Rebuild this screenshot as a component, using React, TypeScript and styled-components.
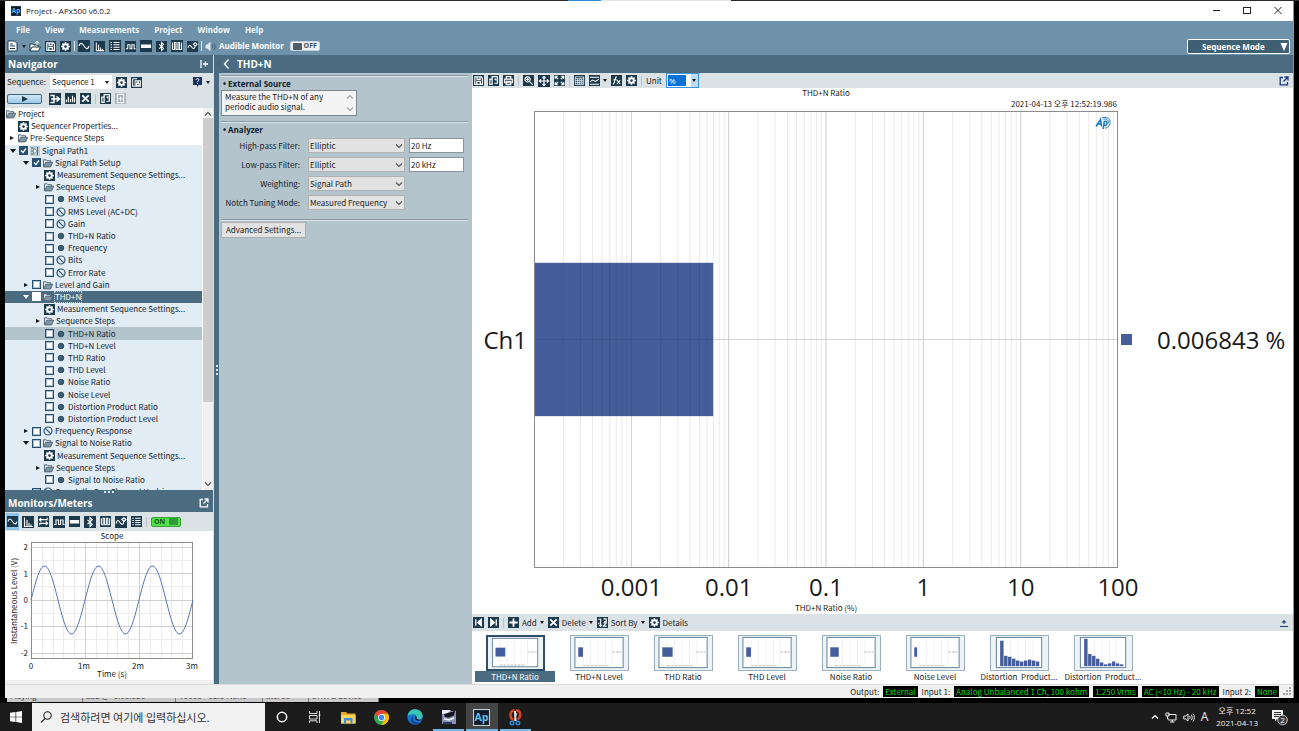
import React from 'react';
import styled, { createGlobalStyle } from 'styled-components';

const color = {
  menu: '#6f92ab',
  header: '#4a6b80',
  bar: '#dae2e6',
  panel: '#b3c4cd',
  tree: '#e1ecf5',
  icon: '#1d3a4c',
  plot: '#455e9b',
  plotLine: '#3d558f',
  status: '#f0f0f0',
  task: '#1c1c1c',
};

const small = '"Noto Sans CJK KR", "Open Sans", sans-serif';

const Global = createGlobalStyle`
  * { box-sizing: border-box; }
  body { margin: 0; background: #000; color: #1a1a1a;
    font-family: "Open Sans", "Noto Sans CJK KR", sans-serif; font-size: 8px; line-height: 12px; }
  button, input, select, textarea { font: inherit; color: inherit; margin: 0; padding: 0; border: 0; border-radius: 0; background: none; }
  ul { list-style: none; margin: 0; padding: 0; }
  h1, h2, h3, p { margin: 0; font-size: inherit; }
  svg { display: block; flex: none; }
`;

/* ---------- icons ---------- */

type IconName = keyof typeof glyphs;

const glyphs = {
  sine: <path d="M1 6C2 2.500 4 2.500 6 6S10 9.500 11 6" />,
  fft: <path d="M2.500 1.500V10.500H11M5 10V4M7 10V7M9 10V8.500" />,
  list: <path d="M4.500 2.500H10.500M4.500 4.800H10.500M4.500 7.200H10.500M4.500 9.500H10.500M1.500 2.500H3M1.500 4.800H3M1.500 7.200H3M1.500 9.500H3" />,
  square: <path d="M1 8.500H3V4H5.500V8.500H7.500V4H10V8.500H11.500" />,
  level: <path d="M1.500 5H10.500V7.500H1.500Z" fill="#fff" />,
  bluetooth: <path d="M3.500 3.800L8.300 8.200L6 10.500V1.500L8.300 3.800L3.500 8.200" />,
  wave: <path d="M1.500 2.500V9.500M1.500 9.500H3.500V2.500H5V9.500H7V2.500H8.500V9.500H10.500V2.500" />,
  trend: <path d="M1 7.500C2 3.500 3.500 4 5 6.500S8.500 9 9 5M6.800 3.500L9 1.800L11 3.500L9 5.500Z" />,
  gear: (
    <>
      <circle cx="6" cy="6" r="2.500" strokeWidth="2" />
      <path d="M6 1.300V3M6 9V10.700M1.300 6H3M9 6H10.700M2.700 2.700L3.900 3.900M8.100 8.100L9.300 9.300M9.300 2.700L8.100 3.900M3.900 8.100L2.700 9.300" strokeWidth="1.700" />
    </>
  ),
  save: <path d="M2 2H9L10.300 3.300V10.300H2ZM4.500 2V4.800H7.800V2M4.200 10V7H8V10" strokeWidth="1.300" />,
  copy: <path d="M2 10.300V4.500H4.500V10.300ZM4.500 4V1.700H10.200V9H7M7 4.500H8.500V6" strokeWidth="1.300" />,
  copyLock: <path d="M1.800 1.800H6.500M1.800 1.800V10.200H4M4.500 4H10.200V10.200H4.500ZM6 7H8.800V9H6ZM6.500 7V5.500H8.300V7" />,
  print: <path d="M3.500 4.500V1.800H8.500V4.500M1.800 4.500H10.200V8.500H1.800ZM3.500 7H8.500V10.500H3.500Z" strokeWidth="1.200" />,
  magnify: <path d="M5 2A2.800 2.800 0 1 1 5 7.600A2.800 2.800 0 1 1 5 2M7.200 7.200L10.500 10.500M3.500 4.800H6.500M5 3.300V6.300" strokeWidth="1.200" />,
  expand: <path d="M6 1.500V10.500M1.500 6H10.500M4.500 3L6 1.500L7.500 3M4.500 9L6 10.500L7.500 9M3 4.500L1.500 6L3 7.500M9 4.500L10.500 6L9 7.500" strokeWidth="1.200" />,
  fit: <path d="M1.500 4V1.500H4M8 1.500H10.500V4M10.500 8V10.500H8M4 10.500H1.500V8M2 2L4.500 4.500M10 2L7.500 4.500M10 10L7.500 7.500M2 10L4.500 7.500" strokeWidth="1.500" />,
  grid: <path d="M1.500 2H10.500V10.500H1.500ZM1.500 4H10.500M1.500 6.200H10.500M1.500 8.400H10.500M4 4V10.500M6.200 4V10.500M8.400 4V10.500" strokeWidth="0.800" />,
  graph: <path d="M1 2.500H11M1 10H11M1 7.500L4 5.500L7 7L11 4.500" />,
  fx: <path d="M2 10C4.500 10 3.500 2 6.300 2M2.800 5H6M6.500 5.500L10 9.800M10 5.500L6.500 9.800" strokeWidth="1.200" />,
  sequence: <path d="M1.500 2.500H5V9.500H1.500M2 6H10.500M7.500 3.500L10.500 6L7.500 8.500" strokeWidth="1.500" />,
  bars: <path d="M1.500 10V7M3.700 10V4M6 10V6.500M8.200 10V3M10.300 10V5" strokeWidth="1.300" />,
  close: <path d="M2.500 2.500L9.500 9.500M9.500 2.500L2.500 9.500" strokeWidth="2" />,
  plus: <path d="M6 1.500V10.500M1.500 6H10.500" strokeWidth="2" />,
  plusDoc: <path d="M2.500 1.500H9.500V10.500H2.500ZM6 4V8.500M3.800 6.200H8.200" />,
  swap: <path d="M2 4H10V2M3.500 2L1.500 4L3.500 6M10 8H2V10M8.500 6L10.500 8L8.500 10" strokeWidth="1.200" />,
  first: <path d="M3 2.500V9.500M9 2.500L5 6L9 9.500Z" fill="#fff" strokeWidth="1.400" />,
  last: <path d="M9 2.500V9.500M3 2.500L7 6L3 9.500Z" fill="#fff" strokeWidth="1.400" />,
  sort: <path d="M1.500 2.500H4V10M2.500 8.500L4 10.300L5.500 8.500M7 2H10V5H7.500M10.500 10H7L10 6.500H7M2 6V8" strokeWidth="1.200" />,
};

const Icon = ({ name, size = 12, bg = color.icon }: { name: IconName; size?: number; bg?: string }) => (
  <svg width={size} height={size} viewBox="0 0 12 12" fill="none" stroke="#fff" strokeWidth="1.100" aria-hidden="true">
    <rect width="12" height="12" fill={bg} stroke="none" />
    {glyphs[name]}
  </svg>
);

const FolderIcon = () => (
  <svg width="10" height="10" viewBox="0 0 11 10" aria-hidden="true">
    <path d="M.5 9V1.500H3.500L4.500 2.500H8.500V4" fill="#dfe8ec" stroke="#44596a" />
    <path d="M.6 9.300L3 4.200H10.700L8.400 9.300Z" fill="#7f96a5" stroke="#44596a" strokeWidth=".9" />
  </svg>
);
const DotIcon = () => (
  <svg width="10" height="10" viewBox="0 0 10 10" aria-hidden="true">
    <circle cx="5" cy="5" r="2.800" fill="#3f5f76" stroke="#1d3a4c" strokeWidth=".8" />
  </svg>
);
const NoneIcon = () => (
  <svg width="10" height="10" viewBox="0 0 10 10" fill="none" stroke="#33566e" strokeWidth="1.200" aria-hidden="true">
    <circle cx="5" cy="5" r="4" />
    <path d="M2.300 2.300L7.700 7.700" />
  </svg>
);
const PathIcon = () => (
  <svg width="10" height="10" viewBox="0 0 10 10" aria-hidden="true">
    <rect width="10" height="10" fill="#b9cad4" />
    <path d="M1 2H3M1 5H3M1 8H3M7.500 1V9" stroke="#567387" />
    <path d="M3.500 2L7 5L3.500 8Z" fill="#fff" stroke="#567387" strokeWidth=".7" />
  </svg>
);
const Chevron = ({ dir = 'down', stroke = '#555' }: { dir?: 'up' | 'down'; stroke?: string }) => (
  <svg width="8" height="8" viewBox="0 0 8 8" fill="none" stroke={stroke} strokeWidth="1.200" aria-hidden="true">
    <path d={dir === 'down' ? 'M1 2.500L4 5.500L7 2.500' : 'M1 5.500L4 2.500L7 5.500'} />
  </svg>
);
const Caret = styled.span`
  width: 0;
  border: 2px solid transparent;
  border-top: 3px solid #1a1a1a;
  border-bottom: 0;
  flex: none;
`;
const PopOut = ({ stroke = '#fff' }: { stroke?: string }) => (
  <svg width="10" height="10" viewBox="0 0 10 10" fill="none" stroke={stroke} strokeWidth="1.300" aria-hidden="true">
    <path d="M4 1.500H1.200V8.800H8.500V6M5.500 1H9V4.500M9 1L4.500 5.500" />
  </svg>
);

/* ---------- shared controls ---------- */

const IconButton = styled.button<{ $on?: boolean }>`
  display: flex;
  align-items: center;
  gap: 3px;
  padding: ${p => (p.$on ? '3px 1px' : '0')};
  margin: ${p => (p.$on ? '0 -1px' : '0')};
  background: ${p => (p.$on ? '#8cc4f0' : 'none')};
  white-space: nowrap;
`;
const Separator = styled.span<{ $light?: boolean }>`
  width: 1px;
  height: 10px;
  background: ${p => (p.$light ? '#dfe8ee' : '#b9c4ca')};
`;
const Spacer = styled.span`flex: 1;`;
const SmallText = styled.span`font-family: ${small};`;

/* ---------- frame ---------- */

const Screen = styled.div`
  height: 100vh;
  min-height: 600px;
  display: flex;
  flex-direction: column;
  background: #000;
  overflow: hidden;
`;
const TopEdge = styled.div`
  height: 1px;
  flex: none;
  display: grid;
  grid-template-columns: 568fr 33fr 130fr 568fr;
  background: #2d2d2d;
`;
const Sliver = styled.i<{ $c: string }>`background: ${p => p.$c};`;
const AppWindow = styled.main`
  flex: 1;
  min-height: 0;
  display: flex;
  flex-direction: column;
  margin: 0 5px;
  border-right: 1px solid #8099a9;
  background: ${color.status};
`;
const TitleBar = styled.header`
  height: 20px;
  flex: none;
  display: flex;
  align-items: center;
  gap: 5px;
  padding: 0 10px 0 6px;
  background: #fff;
  h1 { font-weight: 400; line-height: 18px; }
`;
const WindowButtons = styled.div`
  display: flex;
  gap: 21px;
`;
const CommandArea = styled.div`
  height: 34px;
  flex: none;
  display: flex;
  align-items: flex-end;
  justify-content: space-between;
  padding: 0 3px 1px 2px;
  background: ${color.menu};
  color: #fff;
  font-weight: 700;
`;
const Menu = styled.nav`
  display: flex;
  gap: 15px;
  padding: 0 0 0 9px;
  height: 16px;
`;
const MenuButton = styled.button`color: #f2f7fa;`;
const Tools = styled.div`
  display: flex;
  align-items: center;
  height: 16px;
  gap: 3px;
`;
const ToolGroup = styled.div`
  display: flex;
  align-items: center;
  gap: 4px;
`;
const Toggle = styled.button<{ $on?: boolean }>`
  display: flex;
  flex-direction: ${p => (p.$on ? 'row-reverse' : 'row')};
  align-items: center;
  justify-content: space-between;
  width: 30px;
  height: 10px;
  padding: 0 2px;
  margin-left: ${p => (p.$on ? '0' : '3px')};
  border-radius: 2px;
  line-height: 10px;
  font-size: 7px;
  font-weight: 700;
  background: ${p => (p.$on ? '#4fe04a' : '#eef1f3')};
  color: ${p => (p.$on ? '#14551a' : '#44525c')};
  border: 1px solid ${p => (p.$on ? '#39a538' : '#c5d0d7')};
  i { width: 9px; height: 7px; border-radius: 1px; background: ${p => (p.$on ? '#2f9c38' : '#4c5d69')}; }
`;
const ModeButton = styled.button`
  display: flex;
  align-items: center;
  justify-content: space-between;
  width: 103px;
  height: 15px;
  padding: 0 1px 0 14px;
  border: 1px solid #fff;
  border-radius: 2px;
  background: #3f5f73;
  color: #fff;
`;
const Body = styled.div`
  flex: 1;
  min-height: 0;
  display: grid;
  grid-template-columns: 208px 6px 1fr;
`;
const Bar = styled.div`
  height: 18px;
  flex: none;
  display: flex;
  align-items: center;
  gap: 6px;
  padding: 0 4px 1px 3px;
  background: ${color.header};
  color: #fff;
  h2 { font-size: 10px; line-height: 16px; flex: 1; }
`;
const Splitter = styled.div`
  display: flex;
  align-items: center;
  justify-content: center;
  background: ${color.header};
  border-left: 1px solid #d5e0e6;
`;

/* ---------- navigator ---------- */

const Side = styled.aside`
  display: flex;
  flex-direction: column;
  min-height: 0;
`;
const NavTools = styled.div`
  flex: none;
  height: 35px;
  padding: 0 3px 0 2px;
  background: ${color.bar};
`;
const NavRow = styled.div<{ $h: number }>`
  display: flex;
  align-items: center;
  gap: 4px;
  height: ${p => p.$h}px;
`;
const SeqSelect = styled.span`
  display: grid;
  align-items: center;
  width: 62px;
  height: 14px;
  background: #fff;
  > * { grid-area: 1 / 1; }
  select { appearance: none; padding-left: 2px; width: 100%; font-family: ${small}; }
  ${Caret} { justify-self: end; margin-right: 3px; pointer-events: none; }
`;
const RunButton = styled.button`
  width: 35px;
  height: 10px;
  margin-right: 3px;
  display: grid;
  place-items: center;
  border: 1px solid #3c6584;
  border-radius: 2px;
  background: linear-gradient(#cfe7f6, #9dcbea);
`;
const TreeBox = styled.div`
  flex: 1;
  min-height: 0;
  display: grid;
  grid-template-columns: 1fr 10px;
  background: #fff;
`;
const TreeView = styled.div`
  min-height: 0;
  overflow: hidden;
  font-family: ${small};
`;
const Tree = styled.ul<{ $rows: number }>`
  height: calc(100% - 4px);
  display: grid;
  grid-template-rows: repeat(${p => p.$rows}, 1fr);
`;
const NextRows = styled.ul`
  display: grid;
  grid-auto-rows: 12px;
`;
const TreeItem = styled.li<{ $depth: number; $tint?: boolean; $state?: 'active' | 'marked' }>`
  min-height: 0;
  display: flex;
  align-items: center;
  gap: 2px;
  padding-left: ${p => p.$depth}px;
  white-space: nowrap;
  margin-right: 1px;
  color: ${p => (p.$state === 'active' ? '#fff' : '#14212b')};
  background: ${p => (p.$state === 'active' ? color.header : p.$state === 'marked' ? color.panel : p.$tint ? color.tree : '#fff')};
  label { display: flex; align-items: center; gap: 2px; }
`;
const RowText = styled.span<{ $focus?: boolean }>`
  line-height: 10px;
  outline: ${p => (p.$focus ? '1px dotted #c7d3da' : 'none')};
`;
const Expander = styled.button<{ $open?: boolean; $light?: boolean }>`
  width: 9px;
  height: 10px;
  display: grid;
  place-items: center;
  color: ${p => (p.$light ? '#fff' : '#1a1a1a')};
  i {
    border: ${p => (p.$open ? '3px' : '2px')} solid transparent;
    ${p => (p.$open ? 'border-top: 4px solid currentColor; border-bottom: 0;' : 'border-left: 4px solid currentColor; border-right: 0;')}
  }
`;
const Check = styled.input<{ $light?: boolean }>`
  appearance: none;
  width: 9px;
  height: 9px;
  flex: none;
  border: 1px solid ${p => (p.$light ? '#fff' : '#27506f')};
  box-shadow: inset 0 0 0 1px ${p => (p.$light ? '#fff' : '#a9bdcc')};
  background: #fff;
  &:checked { box-shadow: none; background: #27506f; }
`;
const CheckWrap = styled.span`
  display: grid;
  place-items: center;
  > * { grid-area: 1 / 1; }
  svg { pointer-events: none; }
`;
const Scroll = styled.div`
  display: flex;
  flex-direction: column;
  align-items: center;
  background: #f0f0f0;
  padding: 2px 0;
  i { width: 100%; height: 75%; margin-bottom: auto; background: #cdcdcd; }
`;

type Row = {
  text: string; depth: number; tint?: boolean; open?: boolean; toggle?: boolean;
  check?: boolean; icon: 'folder' | 'gear' | 'dot' | 'none' | 'path'; state?: 'active' | 'marked';
};
const folder = (text: string, depth: number, open: boolean, extra: Partial<Row> = {}): Row =>
  ({ text, depth, toggle: true, open, icon: 'folder', tint: true, ...extra });
const leaf = (text: string, icon: 'dot' | 'none' = 'dot', state?: 'marked'): Row =>
  ({ text, depth: 40, icon, check: false, tint: true, state });
const settings: Row = { text: 'Measurement Sequence Settings...', depth: 39, icon: 'gear', tint: true };
const steps = folder('Sequence Steps', 28, false);

const rows: Row[] = [
  { text: 'Project', depth: 1, icon: 'folder' },
  { text: 'Sequencer Properties...', depth: 13, icon: 'gear' },
  folder('Pre-Sequence Steps', 2, false, { tint: false }),
  folder('Signal Path1', 3, true, { check: true, icon: 'path' }),
  folder('Signal Path Setup', 16, true, { check: true }),
  settings, steps,
  leaf('RMS Level'), leaf('RMS Level (AC+DC)', 'none'), leaf('Gain', 'none'), leaf('THD+N Ratio'),
  leaf('Frequency'), leaf('Bits', 'none'), leaf('Error Rate', 'none'),
  folder('Level and Gain', 16, false, { check: false }),
  folder('THD+N', 16, true, { check: false, state: 'active' }),
  settings, steps,
  leaf('THD+N Ratio', 'dot', 'marked'), leaf('THD+N Level'), leaf('THD Ratio'), leaf('THD Level'),
  leaf('Noise Ratio'), leaf('Noise Level'), leaf('Distortion Product Ratio'), leaf('Distortion Product Level'),
  folder('Frequency Response', 16, false, { check: false, icon: 'none' }),
  folder('Signal to Noise Ratio', 16, true, { check: false }),
  settings, steps,
  leaf('Signal to Noise Ratio'),
];
const nextRow = folder('Crosstalk, One Channel Undriven', 16, false, { check: false, icon: 'none' });

const rowIcon = {
  folder: <FolderIcon />, gear: <Icon name="gear" size={11} />, dot: <DotIcon />, none: <NoneIcon />, path: <PathIcon />,
};

const TreeRow = ({ row: r }: { row: Row }) => {
  const light = r.state === 'active';
  return (
    <TreeItem $depth={r.depth} $tint={r.tint} $state={r.state}>
      {r.toggle && <Expander $open={r.open} $light={light} aria-label={`Toggle ${r.text}`}><i /></Expander>}
      <label>
        {r.check !== undefined && (
          <CheckWrap>
            <Check type="checkbox" $light={light} defaultChecked={r.check} />
            {r.check && <svg width="9" height="9" viewBox="0 0 9 9" fill="none" stroke="#fff" strokeWidth="1.300"><path d="M2 4.500L4 6.500L7 2.500" /></svg>}
          </CheckWrap>
        )}
        {rowIcon[r.icon]}
        <RowText $focus={light}>{r.text}</RowText>
      </label>
    </TreeItem>
  );
};

const NavigatorTree = () => (
  <TreeBox>
    <TreeView>
      <Tree $rows={rows.length}>{rows.map((r, i) => <TreeRow key={i} row={r} />)}</Tree>
      <NextRows><TreeRow row={nextRow} /></NextRows>
    </TreeView>
    <Scroll><Chevron dir="up" /><i /><Chevron /></Scroll>
  </TreeBox>
);

/* ---------- monitors ---------- */

const MonitorHead = styled.div`
  flex: none;
  height: 22px;
  background: ${color.header};
`;
const Dots = styled.div<{ $vertical?: boolean }>`
  display: flex;
  flex-direction: ${p => (p.$vertical ? 'column' : 'row')};
  justify-content: center;
  gap: 2px;
  height: ${p => (p.$vertical ? 'auto' : '4px')};
  align-items: center;
  i { width: 2px; height: 2px; background: #dbe5ea; }
`;
const MonitorTools = styled.div`
  flex: none;
  height: 19px;
  display: flex;
  align-items: center;
  gap: 4px;
  padding-left: 2px;
  background: ${color.bar};
`;
const ScopeBox = styled.div`
  flex: none;
  height: 153px;
  background: #fff;
  border-bottom: 4px solid ${color.status};
`;

const scopePath = Array.from({ length: 163 }, (_, i) =>
  `${i ? 'L' : 'M'}${26 + i} ${(69 - 34 * Math.sin((i / 54) * 2 * Math.PI)).toFixed(1)}`).join('');

const Scope = () => (
  <svg width="208" height="149" viewBox="0 0 208 149" fontFamily={small} fontSize="8" fill="#222" role="img" aria-label="Scope">
    <g stroke="#ececec">
      {Array.from({ length: 14 }, (_, i) => <path key={i} d={`M${26.5 + Math.round((i + 1) * 10.8)} 12V128`} />)}
      {[29, 55, 82, 108].map(y => <path key={y} d={`M26 ${y + 0.5}H188`} />)}
    </g>
    <g stroke="#cfcfcf">
      <path d="M80.500 12V128M134.500 12V128M26 16.500H188M26 42.500H188M26 69.500H188M26 95.500H188M26 122.500H188" />
    </g>
    <rect x="26.500" y="11.500" width="161" height="116" fill="none" stroke="#8c8c8c" />
    <path d={scopePath} fill="none" stroke="#5a74b4" />
    <text x="107" y="8" textAnchor="middle">Scope</text>
    <g textAnchor="end">
      <text x="23" y="19">2</text><text x="23" y="46">1</text><text x="23" y="72">0</text>
      <text x="23" y="98">-1</text><text x="23" y="125">-2</text>
    </g>
    <g textAnchor="middle">
      <text x="26" y="138">0</text><text x="79" y="138">1m</text><text x="133" y="138">2m</text><text x="187" y="138">3m</text>
      <text x="107" y="146">Time (s)</text>
      <text x="0" y="0" transform="translate(12 70) rotate(-90)">Instantaneous Level (V)</text>
    </g>
  </svg>
);

/* ---------- measurement settings ---------- */

const Work = styled.section`
  min-width: 0;
  min-height: 0;
  display: flex;
  flex-direction: column;
`;
const WorkBody = styled.div`
  flex: 1;
  min-height: 0;
  display: grid;
  grid-template-columns: 253px 1fr;
`;
const Config = styled.section`
  background: ${color.panel};
  padding: 2px 4px 0 2px;
  font-family: ${small};
`;
const Section = styled.div<{ $h: number }>`
  height: ${p => p.$h}px;
  border-top: 1px solid #8d9aa3;
  box-shadow: inset 0 1px #dde6ea;
  padding-top: 2px;
  h3 { font: 700 8px/12px "Open Sans", sans-serif; padding: 0 0 0 2px; color: #10202c; }
`;
const Note = styled.div`
  display: flex;
  width: 136px;
  height: 26px;
  border: 1px solid #7d8890;
  background: #f4f4f4;
  textarea { flex: 1; min-width: 0; resize: none; overflow: hidden; padding: 1px 0 0 3px; line-height: 10px; outline: 0; }
`;
const NoteScroll = styled.div`
  width: 12px;
  display: flex;
  flex-direction: column;
  align-items: center;
  justify-content: space-between;
  padding: 2px 0;
`;
const Fields = styled.div`
  display: grid;
  grid-template-columns: 79px 97px 55px;
  column-gap: 8px;
  row-gap: 4px;
  align-items: center;
  padding-top: 2px;
  label { text-align: right; white-space: nowrap; }
`;
const Choice = styled.span`
  display: grid;
  align-items: center;
  height: 15px;
  border: 1px solid #b1b1b1;
  background: #e2e2e2;
  > * { grid-area: 1 / 1; }
  select { appearance: none; width: 100%; padding-left: 1px; }
  svg { justify-self: end; margin-right: 1px; pointer-events: none; }
`;
const Field = styled.input`
  width: 55px;
  height: 15px;
  margin-left: -4px;
  padding-left: 1px;
  background: #fff;
  border: 1px solid #8b959b;
`;
const Advanced = styled.button`
  width: 85px;
  height: 16px;
  border: 1px solid #adadad;
  background: #e2e2e2;
`;

const fields = [
  ['High-pass Filter:', 'Elliptic', '20 Hz'],
  ['Low-pass Filter:', 'Elliptic', '20 kHz'],
  ['Weighting:', 'Signal Path', ''],
  ['Notch Tuning Mode:', 'Measured Frequency', ''],
];

/* ---------- graph ---------- */

const GraphPane = styled.section`
  min-width: 0;
  min-height: 0;
  display: flex;
  flex-direction: column;
  background: #fff;
`;
const GraphTools = styled.div<{ $h: number }>`
  flex: none;
  height: ${p => p.$h}px;
  display: flex;
  align-items: center;
  gap: 4px;
  padding: 0 4px 0 1px;
  background: ${color.bar};
`;
const Unit = styled.span`
  display: grid;
  align-items: center;
  width: 33px;
  height: 15px;
  border: 1px solid #3a95dc;
  background: linear-gradient(90deg, #fff 24px, #bcdcf4 24px);
  > * { grid-area: 1 / 1; }
  select { appearance: none; width: 18px; height: 11px; margin-left: 1px; padding-left: 1px; background: #0a74d6; color: #fff; line-height: 11px; }
  ${Caret} { justify-self: end; margin-right: 2px; pointer-events: none; }
`;
const Chart = styled.div`
  flex: 1;
  min-height: 0;
  display: grid;
  grid-template-columns: 62px 1fr 175px;
  grid-template-rows: 23px 1fr 46px;
`;
const ChartHead = styled.div`
  grid-column: 2;
  line-height: 10px;
  text-align: center;
  font-family: ${small};
  time { display: block; text-align: right; padding-right: 1px; line-height: 12px; }
`;
const Channel = styled.div`
  grid-area: 2 / 1;
  align-self: center;
  text-align: right;
  padding-right: 7px;
  font-size: 24px;
  line-height: 32px;
`;
const PlotArea = styled.div`
  grid-area: 2 / 2;
  position: relative;
  min-height: 0;
  svg.plot { width: 100%; height: 100%; }
`;
const Logo = styled.svg`
  position: absolute;
  top: 5px;
  right: 6px;
`;
const Legend = styled.div`
  grid-area: 2 / 3;
  align-self: center;
  display: flex;
  align-items: center;
  gap: 25px;
  padding-left: 3px;
  font-size: 24px;
  line-height: 32px;
  white-space: nowrap;
  i { width: 11px; height: 11px; background: ${color.plot}; }
`;
const Axis = styled.div`
  grid-area: 3 / 2;
  text-align: center;
`;
const Ticks = styled.div`
  display: grid;
  grid-template-columns: repeat(6, 1fr);
  margin-right: -8.333%;
  margin-left: 8.333%;
  padding-top: 3px;
  font-size: 24px;
  line-height: 32px;
`;
const AxisName = styled.p`
  line-height: 10px;
  font-family: ${small};
`;

const minorLines = Array.from({ length: 6 }, (_, d) =>
  [2, 3, 4, 5, 6, 7, 8, 9].map(n => ((d + Math.log10(n)) / 6) * 100)).flat();
const majorLines = [1, 2, 3, 4, 5].map(d => (d / 6) * 100);
const barEnd = 30.6;

const VLine = ({ x, y1 = '0', y2 = '100%', stroke }: { x: number; y1?: string; y2?: string; stroke: string }) => (
  <line x1={`${x}%`} x2={`${x}%`} y1={y1} y2={y2} stroke={stroke} />
);

const LogPlot = () => (
  <PlotArea>
    <svg className="plot" aria-label="THD+N Ratio bar chart" role="img">
      {minorLines.map(x => <VLine key={x} x={x} stroke="#ebebeb" />)}
      {majorLines.map(x => <VLine key={x} x={x} stroke="#cdcdcd" />)}
      <line x1="0" x2="100%" y1="50%" y2="50%" stroke="#d2d2d2" />
      <rect x="0" y="33.33%" width={`${barEnd}%`} height="33.33%" fill={color.plot} />
      {[...minorLines, majorLines[0]].filter(x => x < barEnd).map(x => (
        <VLine key={x} x={x} y1="33.33%" y2="66.66%" stroke={color.plotLine} />
      ))}
      <line x1="0" x2={`${barEnd}%`} y1="50%" y2="50%" stroke={color.plotLine} />
      <rect x="0" y="33.33%" width={`${barEnd}%`} height="33.33%" fill="none" stroke={color.plotLine} />
      <rect x="0" y="0" width="100%" height="100%" fill="none" stroke="#8c8c8c" strokeWidth="2" />
    </svg>
    <Logo width="17" height="14" viewBox="0 0 17 14" fill="none" stroke="#1e78b8" aria-label="Audio Precision logo">
      <path d="M1 10.500L5.500 3.500L6.500 10.500M3 8H6.300" strokeWidth="1.600" />
      <path d="M8.200 13L9.300 5.500C13 4 13 10 8.900 9.500" strokeWidth="1.500" />
      <path d="M7 2C13 0 16 4 15 7.500C14.500 10 12.500 11.800 10 12.300M8.500 3.200C12 2.500 13.800 4.500 13.300 7.300" strokeWidth="1" />
    </Logo>
  </PlotArea>
);

/* ---------- thumbnails ---------- */

const Thumbs = styled.div`
  flex: none;
  height: 53px;
  display: flex;
  gap: 4px;
  padding: 4px 0 0 3px;
`;
const Thumb = styled.button<{ $selected?: boolean }>`
  width: 80px;
  height: 47px;
  display: flex;
  flex-direction: column;
  align-items: center;
  font-family: ${small};
  span { width: 100%; line-height: 11px; white-space: pre; background: ${p => (p.$selected ? color.header : 'none')}; color: ${p => (p.$selected ? '#fff' : '#1a1a1a')}; }
  svg { border: ${p => (p.$selected ? '2px solid #2c5069' : '1px solid #9db0bd')}; background: #eef3f6; }
`;

const thumbs: { name: string; bar?: number; bars?: number[] }[] = [
  { name: 'THD+N Ratio', bar: 11 }, { name: 'THD+N Level', bar: 5 }, { name: 'THD Ratio', bar: 11 },
  { name: 'THD Level', bar: 5 }, { name: 'Noise Ratio', bar: 9 }, { name: 'Noise Level', bar: 3 },
  { name: 'Distortion  Product...', bars: [27, 11, 10, 8, 6, 5, 6, 7, 6, 5] },
  { name: 'Distortion  Product...', bars: [29, 13, 11, 8, 4, 2, 3, 5, 3, 2] },
];

const ThumbGraph = ({ bar, bars }: { bar?: number; bars?: number[] }) => (
  <svg width="59" height="36" viewBox="0 0 59 36" aria-hidden="true">
    <rect x={bars ? 5 : 3.5} y="1.500" width={bars ? 48 : 51} height="32" fill="#fff" stroke="#5d7f98" />
    <path d="M12 3V30M20 3V30M28 3V30M36 3V30M43 3V30" stroke="#efefef" />
    {bar && (
      <>
        <rect x="7" y="12" width={bar} height="10" fill={color.plot} />
        <path d="M43 17H53M12 31.500H40" stroke="#9a9a9a" strokeDasharray="3 1" strokeWidth=".7" />
      </>
    )}
    {bars?.map((h, i) => <rect key={i} x={9 + i * 4.2} y={32 - h} width="3.600" height={h} fill={color.plot} />)}
  </svg>
);

/* ---------- status and task bars ---------- */

const StatusBar = styled.footer`
  flex: none;
  height: 14px;
  display: flex;
  align-items: center;
  justify-content: flex-end;
  gap: 4px;
  padding-right: 1px;
  border-top: 1px solid #dcdcdc;
  white-space: nowrap;
  font-family: ${small};
`;
const Readout = styled.span`
  height: 11px;
  line-height: 11px;
  padding: 0 2px;
  background: #000;
  color: #0bd616;
`;
const BackWindow = styled.div`
  flex: none;
  height: 5px;
  overflow: hidden;
  display: grid;
  grid-template-columns: 76px 93px 87px 46px 70px;
  margin-left: 7px;
  span {
    height: 4px; overflow: hidden; background: #c9c9c9; color: #333; border-right: 1px solid #777;
    display: flex; align-items: flex-end; padding-left: 3px; white-space: nowrap;
  }
`;
const TaskBar = styled.footer`
  flex: none;
  height: 28px;
  display: flex;
  background: ${color.task};
  color: #eee;
`;
const StartButton = styled.button`
  width: 32px;
  display: grid;
  place-items: center;
`;
const Search = styled.label`
  width: 233px;
  display: flex;
  align-items: center;
  gap: 8px;
  padding-left: 8px;
  background: #f1f1f1;
  input { flex: 1; min-width: 0; font-family: "Noto Sans CJK KR", sans-serif; font-size: 11px; outline: 0; }
  input::placeholder { color: #333; opacity: 1; }
`;
const TaskButtons = styled.div`
  width: 267px;
  display: flex;
`;
const TaskButton = styled.button<{ $running?: boolean; $active?: boolean }>`
  flex: 1;
  margin: 0 1px;
  display: grid;
  place-items: center;
  background: ${p => (p.$active ? '#454545' : 'none')};
  border-bottom: 2px solid ${p => (p.$running ? '#72b7ea' : 'transparent')};
  border-top: 2px solid transparent;
`;
const Tray = styled.div`
  display: flex;
  align-items: center;
  gap: 6px;
  padding-right: 11px;
`;
const ImeText = styled.span`
  font-size: 12px;
  line-height: 14px;
`;
const Clock = styled.time`
  text-align: center;
  line-height: 12px;
  padding: 0 7px 0 2px;
`;

const ApIcon = ({ size }: { size: number }) => (
  <svg width={size} height={size} viewBox="0 0 16 16" aria-hidden="true">
    <rect x=".5" y=".5" width="15" height="15" fill="#0e1d28" stroke={size > 12 ? '#c3d0d8' : '#0e1d28'} />
    <text x="8" y="11.500" textAnchor="middle" fontSize="10" fontWeight="700" fill="#63bfe8">Ap</text>
  </svg>
);

const monitorIcons: IconName[] = ['sine', 'fft', 'list', 'square', 'level', 'bluetooth', 'wave', 'trend'];
const scopeIcons: IconName[] = ['sine', 'fft', 'swap', 'square', 'level', 'bluetooth', 'wave', 'trend', 'list'];

export default function App() {
  return (
    <Screen>
      <Global />
      <TopEdge><Sliver $c="transparent" /><Sliver $c="#2f8ad8" /><Sliver $c="#e4e4e4" /></TopEdge>
      <AppWindow>
        <TitleBar>
          <ApIcon size={10} />
          <h1>Project - APx500 v6.0.2</h1>
          <Spacer />
          <WindowButtons>
            <IconButton aria-label="Minimize"><svg width="10" height="10" stroke="#222"><path d="M2 4.500H9" /></svg></IconButton>
            <IconButton aria-label="Maximize"><svg width="10" height="10" stroke="#222" fill="none"><rect x="1.500" y="1.500" width="7" height="6" /></svg></IconButton>
            <IconButton aria-label="Close"><svg width="10" height="10" stroke="#222"><path d="M1.500 1L8.500 8M8.500 1L1.500 8" /></svg></IconButton>
          </WindowButtons>
        </TitleBar>
        <CommandArea>
          <div>
            <Menu>
              {['File', 'View', 'Measurements', 'Project', 'Window', 'Help'].map(m => <MenuButton key={m}>{m}</MenuButton>)}
            </Menu>
            <Tools>
              <IconButton aria-label="New">
                <svg width="12" height="12" viewBox="0 0 12 12" aria-hidden="true"><path d="M1 1H7.500L10 3.500V11H1Z" fill="#fff" stroke="#1d3a4c" /><path d="M3 4H6M3 6H8M3 8.500H8" stroke="#1d3a4c" /></svg>
                <Caret />
              </IconButton>
              <ToolGroup>
                <IconButton aria-label="Open">
                  <svg width="12" height="12" viewBox="0 0 12 12" aria-hidden="true"><path d="M1 11V4H4L5 5H9V7" fill="#fff" stroke="#1d3a4c" /><path d="M1 11L3 7H11.500L9.500 11Z" fill="#fff" stroke="#1d3a4c" /><path d="M6 3.500L8 1L10 3.500M8 1V5" stroke="#fff" fill="none" /></svg>
                </IconButton>
                <IconButton aria-label="Save"><Icon name="save" size={11} /></IconButton>
                <IconButton aria-label="Settings"><Icon name="gear" size={11} /></IconButton>
              </ToolGroup>
              <Separator $light />
              <ToolGroup>
                {monitorIcons.map((n, i) => <IconButton key={n} aria-label={n}><Icon name={n} size={i % 2 ? 11 : 12} /></IconButton>)}
              </ToolGroup>
              <Separator $light />
              <svg width="11" height="11" viewBox="0 0 11 11" fill="none" stroke="#dfe8ee" aria-hidden="true"><path d="M1 4H2.500L5 1.500V9.500L2.500 7H1Z" fill="#dfe8ee" /><path d="M7 3.500C8 5 8 6 7 7.500M9 2C10.500 4.500 10.500 6.500 9 9" stroke="#46606f" /></svg>
              <span>Audible Monitor</span>
              <Toggle aria-label="Audible Monitor"><i />OFF</Toggle>
            </Tools>
          </div>
          <ModeButton>Sequence Mode
            <svg width="8" height="8" viewBox="0 0 8 8" fill="#fff" aria-hidden="true"><path d="M.5 0H7.500L4 8Z" /></svg>
          </ModeButton>
        </CommandArea>

        <Body>
          <Side>
            <Bar>
              <h2>Navigator</h2>
              <svg width="10" height="10" viewBox="0 0 10 10" stroke="#fff" strokeWidth="1.300" aria-hidden="true"><path d="M2 1V9M4 5H9M6.500 2.500V7.500" /></svg>
            </Bar>
            <NavTools>
              <NavRow $h={18}>
                <label htmlFor="sequence"><SmallText>Sequence:</SmallText></label>
                <SeqSelect><select id="sequence"><option>Sequence 1</option></select><Caret /></SeqSelect>
                <IconButton aria-label="Sequence settings"><Icon name="gear" size={11} /></IconButton>
                <IconButton aria-label="Lock sequence"><Icon name="copyLock" size={11} /></IconButton>
                <Spacer />
                <IconButton aria-label="Help">
                  <svg width="11" height="12" viewBox="0 0 11 12" aria-hidden="true"><path d="M1 1H10V9H6.500L5 11.500V9H1Z" fill="#1d3264" /><path d="M4 3.800C4 2.300 7 2.300 7 3.800C7 4.800 5.500 4.800 5.500 6M5.500 6.800V8" stroke="#fff" fill="none" /></svg>
                  <Caret />
                </IconButton>
              </NavRow>
              <NavRow $h={15}>
                <RunButton aria-label="Run"><svg width="6" height="6"><path d="M0 0L6 3L0 6Z" fill="#1d3a4c" /></svg></RunButton>
                <IconButton aria-label="Run step"><Icon name="sequence" /></IconButton>
                <IconButton aria-label="Report"><Icon name="bars" size={11} /></IconButton>
                <IconButton aria-label="Clear"><Icon name="close" size={11} /></IconButton>
                <Separator />
                <IconButton aria-label="Duplicate"><Icon name="copy" size={11} /></IconButton>
                <IconButton aria-label="Add" disabled><Icon name="plusDoc" size={11} bg="#a9b4ba" /></IconButton>
              </NavRow>
            </NavTools>
            <NavigatorTree />
            <MonitorHead>
              <Dots><i /><i /><i /></Dots>
              <Bar><h2>Monitors/Meters</h2><PopOut /></Bar>
            </MonitorHead>
            <MonitorTools>
              {scopeIcons.map((n, i) => <IconButton key={n} $on={i === 0} aria-label={n}><Icon name={n} size={i % 2 ? 12 : 11} /></IconButton>)}
              <Separator />
              <Toggle $on aria-label="Monitors"><i />ON</Toggle>
            </MonitorTools>
            <ScopeBox><Scope /></ScopeBox>
          </Side>
          <Splitter><Dots $vertical><i /><i /><i /></Dots></Splitter>
          <Work>
            <Bar>
              <IconButton aria-label="Back"><svg width="9" height="12" viewBox="0 0 9 12" fill="none" stroke="#fff" strokeWidth="1.400" aria-hidden="true"><path d="M6.500 1.500L2.500 6L6.500 10.500" /></svg></IconButton>
              <h2>THD+N</h2>
            </Bar>
            <WorkBody>
              <Config>
                <Section $h={46}>
                  <h3>• External Source</h3>
                  <Note>
                    <textarea readOnly aria-label="Description" defaultValue={'Measure the THD+N of any\nperiodic audio signal.'} />
                    <NoteScroll><Chevron dir="up" stroke="#a5a5a5" /><Chevron stroke="#a5a5a5" /></NoteScroll>
                  </Note>
                </Section>
                <Section $h={98}>
                  <h3>• Analyzer</h3>
                  <Fields>
                    {fields.map(([label, value, extra], i) => (
                      <React.Fragment key={label}>
                        <label htmlFor={`f${i}`}>{label}</label>
                        <Choice><select id={`f${i}`}><option>{value}</option></select><Chevron /></Choice>
                        {extra ? <Field aria-label={`${label} frequency`} defaultValue={extra} /> : <span />}
                      </React.Fragment>
                    ))}
                  </Fields>
                </Section>
                <Section $h={20}><Advanced>Advanced Settings...</Advanced></Section>
              </Config>
              <GraphPane>
                <GraphTools $h={15}>
                  <IconButton aria-label="Save"><Icon name="save" size={11} /></IconButton>
                  <IconButton aria-label="Copy"><Icon name="copy" size={11} /></IconButton>
                  <IconButton aria-label="Print"><Icon name="print" size={11} /></IconButton>
                  <Separator />
                  <IconButton aria-label="Zoom"><Icon name="magnify" size={11} /></IconButton>
                  <IconButton aria-label="Pan"><Icon name="expand" /></IconButton>
                  <IconButton aria-label="Fit"><Icon name="fit" size={11} /></IconButton>
                  <Separator />
                  <IconButton aria-label="Table"><Icon name="grid" size={11} /></IconButton>
                  <IconButton aria-label="Graph"><Icon name="graph" size={11} /><Caret /></IconButton>
                  <IconButton aria-label="Function"><Icon name="fx" size={11} /></IconButton>
                  <IconButton aria-label="Graph settings"><Icon name="gear" size={11} /></IconButton>
                  <Separator />
                  <label htmlFor="unit"><SmallText>Unit</SmallText></label>
                  <Unit><select id="unit"><option>%</option></select><Caret /></Unit>
                  <Spacer />
                  <IconButton aria-label="Detach"><PopOut stroke="#1d3a7c" /></IconButton>
                </GraphTools>
                <Chart>
                  <ChartHead><p>THD+N Ratio</p><time>2021-04-13 오후 12:52:19.986</time></ChartHead>
                  <Channel>Ch1</Channel>
                  <LogPlot />
                  <Legend><i />0.006843 %</Legend>
                  <Axis>
                    <Ticks>{['0.001', '0.01', '0.1', '1', '10', '100'].map(t => <span key={t}>{t}</span>)}</Ticks>
                    <AxisName>THD+N Ratio (%)</AxisName>
                  </Axis>
                </Chart>
                <GraphTools $h={17}>
                  <IconButton aria-label="First"><Icon name="first" size={11} /></IconButton>
                  <IconButton aria-label="Last"><Icon name="last" size={11} /></IconButton>
                  <Separator />
                  <IconButton><Icon name="plus" size={11} /><SmallText>Add</SmallText><Caret /></IconButton>
                  <IconButton><Icon name="close" size={11} /><SmallText>Delete</SmallText><Caret /></IconButton>
                  <IconButton><Icon name="sort" size={11} /><SmallText>Sort By</SmallText><Caret /></IconButton>
                  <IconButton><Icon name="gear" size={11} /><SmallText>Details</SmallText></IconButton>
                  <Spacer />
                  <svg width="10" height="10" viewBox="0 0 10 10" aria-hidden="true"><path d="M1 8.500H9M5 3V6" stroke="#1d3a7c" /><path d="M2.500 4.500L5 2L7.500 4.500Z" fill="#1d3a7c" /></svg>
                </GraphTools>
                <Thumbs>
                  {thumbs.map((t, i) => (
                    <Thumb key={i} $selected={i === 0}>
                      <ThumbGraph bar={t.bar} bars={t.bars} />
                      <span>{t.name}</span>
                    </Thumb>
                  ))}
                </Thumbs>
              </GraphPane>
            </WorkBody>
          </Work>
        </Body>

        <StatusBar>
          <span>Output:</span><Readout>External</Readout>
          <span>Input 1:</span><Readout>Analog Unbalanced 1 Ch, 100 kohm</Readout>
          <Readout>1.250 Vrms</Readout><Readout>AC (&lt;10 Hz) - 20 kHz</Readout>
          <span>Input 2:</span><Readout>None</Readout>
          <svg width="9" height="9" viewBox="0 0 9 9" fill="#a5a5a5" aria-hidden="true"><path d="M6 0h2v2h-2zM6 3h2v2h-2zM3 3h2v2h-2zM6 6h2v2h-2zM3 6h2v2h-2zM0 6h2v2h-2z" /></svg>
        </StatusBar>
      </AppWindow>

      <BackWindow aria-hidden="true">
        <span>Playing</span><span>882 @ -0.00.026</span><span>10000 - 02.0 None</span><span>Stereo</span><span>STRTG device</span>
      </BackWindow>

      <TaskBar>
        <StartButton aria-label="Start">
          <svg width="12" height="12" viewBox="0 0 12 12" fill="#fff"><path d="M0 1.700L5.500 1V5.700H0ZM6.200 .9L12 0V5.700H6.200ZM0 6.300H5.500V11L0 10.300ZM6.200 6.300H12V12L6.200 11.100Z" /></svg>
        </StartButton>
        <Search>
          <svg width="12" height="12" viewBox="0 0 12 12" fill="none" stroke="#222" strokeWidth="1.100" aria-hidden="true"><circle cx="7.500" cy="4.500" r="3.700" /><path d="M5 7.500L1 11.500" /></svg>
          <input type="text" placeholder="검색하려면 여기에 입력하십시오." aria-label="검색" />
        </Search>
        <TaskButtons>
          <TaskButton aria-label="Cortana"><svg width="12" height="12" viewBox="0 0 12 12" fill="none" stroke="#fff" strokeWidth="1.500"><circle cx="6" cy="6" r="4.700" /></svg></TaskButton>
          <TaskButton aria-label="Task view"><svg width="12" height="12" viewBox="0 0 12 12" fill="none" stroke="#ddd"><path d="M.5 0V2.500H8V0M.5 4.500H8V8H.5ZM.5 12V9.800H8V12M10.500 0V12M9.500 4H11.500" /></svg></TaskButton>
          <TaskButton aria-label="File Explorer"><svg width="15" height="13" viewBox="0 0 15 13"><path d="M0 1H5L6.500 2.500H14.500V12.500H0Z" fill="#e6a92e" /><path d="M0 4H14.500V12.500H0Z" fill="#fbd45c" /><path d="M3 7H11.500V12.500H9.500V9.500H5V12.500H3Z" fill="#3f8fd6" /></svg></TaskButton>
          <TaskButton aria-label="Chrome"><svg width="15" height="15" viewBox="0 0 15 15"><circle cx="7.500" cy="7.500" r="7.500" fill="#34a853" /><path d="M1 3.800A7.500 7.500 0 0 1 14 3.800H7.500L4.500 9Z" fill="#ea4335" /><path d="M14 3.800A7.500 7.500 0 0 1 7.300 15L10.700 9.200L7.500 3.800Z" fill="#fbbc05" /><circle cx="7.500" cy="7.500" r="3.500" fill="#fff" /><circle cx="7.500" cy="7.500" r="2.700" fill="#4285f4" /></svg></TaskButton>
          <TaskButton aria-label="Edge"><svg width="16" height="16" viewBox="0 0 16 16"><circle cx="8" cy="8" r="7.700" fill="#1b74d0" /><path d="M.5 7C1.500 2 5 .3 8 .3C13 .3 16 4 15.600 7.500C15 10.500 10.500 11 9.500 9.500C10.500 8 9.500 5.500 6.500 5.200C3.500 5 1.500 6 .5 7Z" fill="#37c6b0" /><path d="M6.500 7.500C4.500 10.500 7.500 14 12.500 13.200C10 16 6.500 15.600 5 14C3 11.500 4 8.500 6.500 7.500Z" fill="#0d4a9c" /><path d="M8.500 7C7 9 8.500 11.500 11.500 11.800C13 11.800 14.500 11 15 10.500C14 11 10.500 11 9.500 9.500C10 8.500 9.500 7.500 8.500 7Z" fill="#1c1c1c" /></svg></TaskButton>
          <TaskButton $running aria-label="Remote tool"><svg width="16" height="16" viewBox="0 0 16 16"><rect x="1" y="2" width="14" height="13" fill="#8790b5" /><path d="M1 1H10L6 5H1Z" fill="#e9ecf5" /><path d="M3 5L14 2L13 6.500L8 8.500L4 8Z" fill="#15161c" /><path d="M3 10L8 11L13 9" stroke="#f5f5f5" fill="none" strokeWidth="1.500" /><path d="M2 14H11" stroke="#2f3866" strokeWidth="2" /></svg></TaskButton>
          <TaskButton $running $active aria-label="APx500"><ApIcon size={17} /></TaskButton>
          <TaskButton $running aria-label="Snipping Tool"><svg width="14" height="17" viewBox="0 0 14 17" fill="none"><path d="M5 11C1 8 2 1 6.500 1.500M8 1.500C13 1 13.500 8 9.500 10.500" stroke="#d9431f" strokeWidth="2.600" /><path d="M7 2L7.500 12" stroke="#f0f0f0" strokeWidth="2" /><path d="M9 4L6 12" stroke="#b9b9b9" /><circle cx="4" cy="14" r="1.800" stroke="#2f8ee0" strokeWidth="1.400" /><circle cx="10" cy="14" r="1.800" stroke="#2f8ee0" strokeWidth="1.400" /></svg></TaskButton>
        </TaskButtons>
        <Spacer />
        <Tray>
          <Chevron dir="up" stroke="#fff" />
          <svg width="12" height="11" viewBox="0 0 12 11" fill="none" stroke="#eee" aria-hidden="true"><path d="M3.500 2.500H11V8H3.500M5 10H9.500M7.300 8V10M1 1H4V4H1ZM2.500 4V7H4" /></svg>
          <svg width="12" height="11" viewBox="0 0 12 11" fill="none" stroke="#eee" aria-hidden="true"><path d="M.8 4H2.500L5 2V9L2.500 7H.8ZM6.500 4C7.300 5 7.300 6 6.500 7M8.300 2.800C9.500 4.500 9.500 6.500 8.300 8.200M10 1.500C11.800 4 11.800 7 10 9.500" /></svg>
          <ImeText>A</ImeText>
          <Clock>오후 12:52<br />2021-04-13</Clock>
          <svg width="17" height="17" viewBox="0 0 17 17" aria-hidden="true"><path d="M1 1H12V10H6L4 12.500V10H1Z" fill="#f2f2f2" /><path d="M3 3.500H10M3 5.500H10M3 7.500H8" stroke="#333" /><circle cx="11.500" cy="11" r="4.800" fill="#3a3a3a" stroke="#ccc" /><text x="11.500" y="14" textAnchor="middle" fontSize="8" fill="#fff">2</text></svg>
        </Tray>
      </TaskBar>
    </Screen>
  );
}
